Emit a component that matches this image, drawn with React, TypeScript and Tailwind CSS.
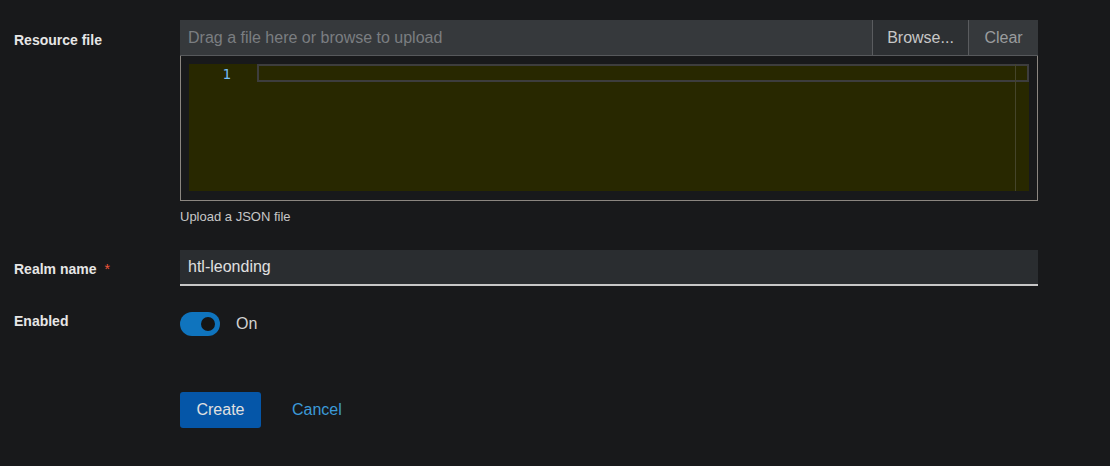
export default function App() {
  return (
    <div
      className="w-[1110px] h-[466px] bg-[#18191b] text-[#e0e0e0] pt-5 overflow-hidden"
      style={{ fontFamily: '"Liberation Sans", Arial, sans-serif' }}
    >
      {/* Resource file */}
      <div className="flex">
        <div className="w-[180px] pl-[14px] pt-[10px] text-[14px] font-bold text-[#e6e6e6]">Resource file</div>
        <div className="w-[858px]">
          <div className="flex h-[36px] bg-[#36393c] border-b border-[#57595c]">
            <div className="flex-1 pl-2 flex items-center text-[16px] text-[#7b7e81]">
              Drag a file here or browse to upload
            </div>
            <button className="w-[96px] border-l border-[#5a5c5f] bg-[#2d3033] text-[16px] text-[#c7c7c7]">
              Browse...
            </button>
            <button className="w-[70px] border-l border-[#5a5c5f] text-[16px] text-[#9a9c9e]">Clear</button>
          </div>
          <div className="border border-t-0 border-[#8b8680] p-2 h-[145px]">
            <div className="h-[127px] bg-[#282800] flex">
              <div
                className="w-[68px] pr-[26px] pt-px text-right text-[14px] leading-[18px] text-[#73bcf7]"
                style={{ fontFamily: '"DejaVu Sans Mono", monospace' }}
              >
                1
              </div>
              <div className="flex-1 relative">
                <div className="h-[18px] border-2 border-[#3d3d3d]" />
                <div className="absolute top-0 bottom-0 right-[13px] w-px bg-[#45452a]" />
              </div>
            </div>
          </div>
          <div className="mt-[6px] text-[13px] text-[#c7c7c7]">Upload a JSON file</div>
        </div>
      </div>

      {/* Realm name */}
      <div className="flex mt-[23px]">
        <div className="w-[180px] pl-[14px] pt-[9px] text-[14px] font-bold text-[#e6e6e6]">
          Realm name <span className="text-[#f0553a] ml-1 font-normal">*</span>
        </div>
        <div className="w-[858px] h-[36px] bg-[#2a2d30] border-b-2 border-[#c7c7c7] pl-2 flex items-center text-[16px] text-[#e0e0e0]">
          htl-leonding
        </div>
      </div>

      {/* Enabled */}
      <div className="flex mt-[20px]">
        <div className="w-[180px] pl-[14px] pt-[5px] text-[14px] font-bold text-[#e6e6e6]">Enabled</div>
        <div className="flex items-center gap-4 pt-[6px]">
          <div className="w-[40px] h-[24px] rounded-full bg-[#0f74be] flex items-center justify-end pr-[5px]">
            <div className="w-[14px] h-[14px] rounded-full bg-[#151515]" />
          </div>
          <span className="text-[16px] text-[#d2d2d2]">On</span>
        </div>
      </div>

      {/* Actions */}
      <div className="flex mt-[56px] pl-[180px] items-center">
        <button className="h-[36px] w-[81px] rounded-[3px] bg-[#0556a8] text-[16px] text-[#e0e0e0]">Create</button>
        <button className="ml-[31px] text-[16px] text-[#3c9ad8]">Cancel</button>
      </div>
    </div>
  );
}
